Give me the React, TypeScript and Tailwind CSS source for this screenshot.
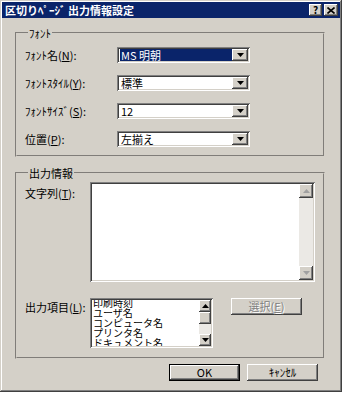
import React from 'react';

const raised =
  'bg-[#d4d0c8] shadow-[inset_-1px_-1px_#404040,inset_1px_1px_#ffffff,inset_-2px_-2px_#808080,inset_2px_2px_#d4d0c8]';
const sunken =
  'bg-white shadow-[inset_1px_1px_#808080,inset_-1px_-1px_#ffffff,inset_2px_2px_#404040,inset_-2px_-2px_#d4d0c8]';
const groove = 'border-2 [border-style:groove] border-[#d4d0c8] rounded-none';

function Arrow({ up = false, color = '#000' }: { up?: boolean; color?: string }) {
  return (
    <svg width="7" height="4" viewBox="0 0 7 4">
      <path d={up ? 'M3.5 0 L7 4 L0 4 Z' : 'M0 0 L7 0 L3.5 4 Z'} fill={color} />
    </svg>
  );
}

function Combo({ value, active = false }: { value: string; active?: boolean }) {
  return (
    <div className={`flex h-[16px] w-[133px] items-center p-[2px] ${sunken}`}>
      <div className="flex h-full flex-1 items-center pl-[1px]">
        <span
          className={`flex h-full w-full items-center pl-[1px] leading-none ${
            active ? 'bg-[#0a246a] text-white' : 'text-black'
          }`}
        >
          {value}
        </span>
      </div>
      <div className={`flex h-full w-[16px] items-center justify-center ${raised}`}>
        <Arrow />
      </div>
    </div>
  );
}

function Label({ text, k, rest = '):' }: { text: string; k: string; rest?: string }) {
  return (
    <span className="leading-none">
      {text}(<span className="underline">{k}</span>
      {rest}
    </span>
  );
}

function Button({ children, def = false, disabled = false }: { children: React.ReactNode; def?: boolean; disabled?: boolean }) {
  return (
    <div className={`h-[17px] w-[71px] ${def ? 'border border-black' : ''}`}>
      <div
        className={`flex h-full w-full items-center justify-center leading-none ${raised} ${
          disabled ? 'text-[#808080] [text-shadow:1px_1px_#ffffff]' : 'text-black'
        }`}
      >
        {children}
      </div>
    </div>
  );
}

export default function App() {
  const fontRows = [
    { label: 'ﾌｫﾝﾄ名', k: 'N', value: 'MS 明朝', active: true },
    { label: 'ﾌｫﾝﾄｽﾀｲﾙ', k: 'Y', value: '標準' },
    { label: 'ﾌｫﾝﾄｻｲｽﾞ', k: 'S', value: '12' },
    { label: '位置', k: 'P', value: '左揃え' },
  ];
  const items = ['印刷時刻', 'ユーザ名', 'コンピュータ名', 'プリンタ名', 'ドキュメント名'];

  return (
    <div className="h-[396px] w-[359px] bg-white text-[11px] text-black [font-family:'Noto_Sans_CJK_JP','Noto_Sans',sans-serif]">
      <div className="flex h-[392px] w-[342px] flex-col bg-[#d4d0c8] p-[2px] shadow-[inset_-1px_-1px_#404040,inset_1px_1px_#d4d0c8,inset_-2px_-2px_#808080,inset_2px_2px_#ffffff]">
        {/* title bar */}
        <div className="flex h-[16px] items-center bg-[#0a246a] pl-[3px] pr-[2px]">
          <span className="flex-1 text-[11px] font-bold leading-none text-white">区切りﾍﾟｰｼﾞ 出力情報設定</span>
          <div className={`flex h-[12px] w-[13px] items-center justify-center text-[10px] font-bold leading-none ${raised}`}>?</div>
          <div className={`ml-[2px] flex h-[12px] w-[14px] items-center justify-center ${raised}`}>
            <svg width="8" height="7" viewBox="0 0 8 7">
              <path d="M0.5 0.5 L7.5 6.5 M7.5 0.5 L0.5 6.5" stroke="#000" strokeWidth="1.6" />
            </svg>
          </div>
        </div>

        {/* font group */}
        <fieldset className={`ml-[13px] mt-[9px] w-[310px] pb-[8px] pl-[8px] pt-[8px] ${groove}`}>
          <legend className="ml-[3px] px-[1px] leading-[12px]">ﾌｫﾝﾄ</legend>
          <div className="flex flex-col gap-[12px]">
            {fontRows.map((r) => (
              <div key={r.k} className="flex h-[16px] items-center">
                <div className="w-[92px]">
                  <Label text={r.label} k={r.k} />
                </div>
                <Combo value={r.value} active={r.active} />
              </div>
            ))}
          </div>
        </fieldset>

        {/* output group */}
        <fieldset className={`ml-[13px] mt-[10px] w-[310px] pb-[9px] pl-[8px] pt-[3px] ${groove}`}>
          <legend className="ml-[3px] px-[1px] leading-[12px]">出力情報</legend>
          <div className="flex">
            <div className="w-[65px] pt-[3px]">
              <Label text="文字列" k="T" />
            </div>
            <div className={`flex h-[100px] w-[225px] p-[2px] ${sunken}`}>
              <div className="flex-1" />
              <div className="flex w-[14px] flex-col bg-[#ebe9e5]">
                <div className={`flex h-[14px] items-center justify-center ${raised}`}>
                  <Arrow up color="#a0a0a0" />
                </div>
                <div className="flex-1" />
                <div className={`flex h-[14px] items-center justify-center ${raised}`}>
                  <Arrow color="#a0a0a0" />
                </div>
              </div>
            </div>
          </div>

          <div className="mt-[16px] flex">
            <div className="w-[65px] pt-[1px]">
              <Label text="出力項目" k="L" />
            </div>
            <div className={`flex h-[50px] w-[123px] p-[2px] ${sunken}`}>
              <div className="flex-1 overflow-hidden pl-[1px]">
                <div className="-mt-[2px] flex flex-col text-[10px] leading-[10px]">
                  {items.map((it) => (
                    <span key={it} className="whitespace-nowrap">
                      {it}
                    </span>
                  ))}
                </div>
              </div>
              <div className="flex w-[12px] flex-col bg-[#ebe9e5]">
                <div className={`flex h-[12px] items-center justify-center ${raised}`}>
                  <Arrow up />
                </div>
                <div className={`h-[12px] ${raised}`} />
                <div className="flex-1" />
                <div className={`flex h-[12px] items-center justify-center ${raised}`}>
                  <Arrow />
                </div>
              </div>
            </div>
            <div className="ml-[18px]">
              <Button disabled>
                選択(<span className="underline">E</span>)
              </Button>
            </div>
          </div>
        </fieldset>

        {/* buttons */}
        <div className="mt-[5px] flex gap-[7px] pl-[167px]">
          <Button def>OK</Button>
          <Button>ｷｬﾝｾﾙ</Button>
        </div>
      </div>
    </div>
  );
}
